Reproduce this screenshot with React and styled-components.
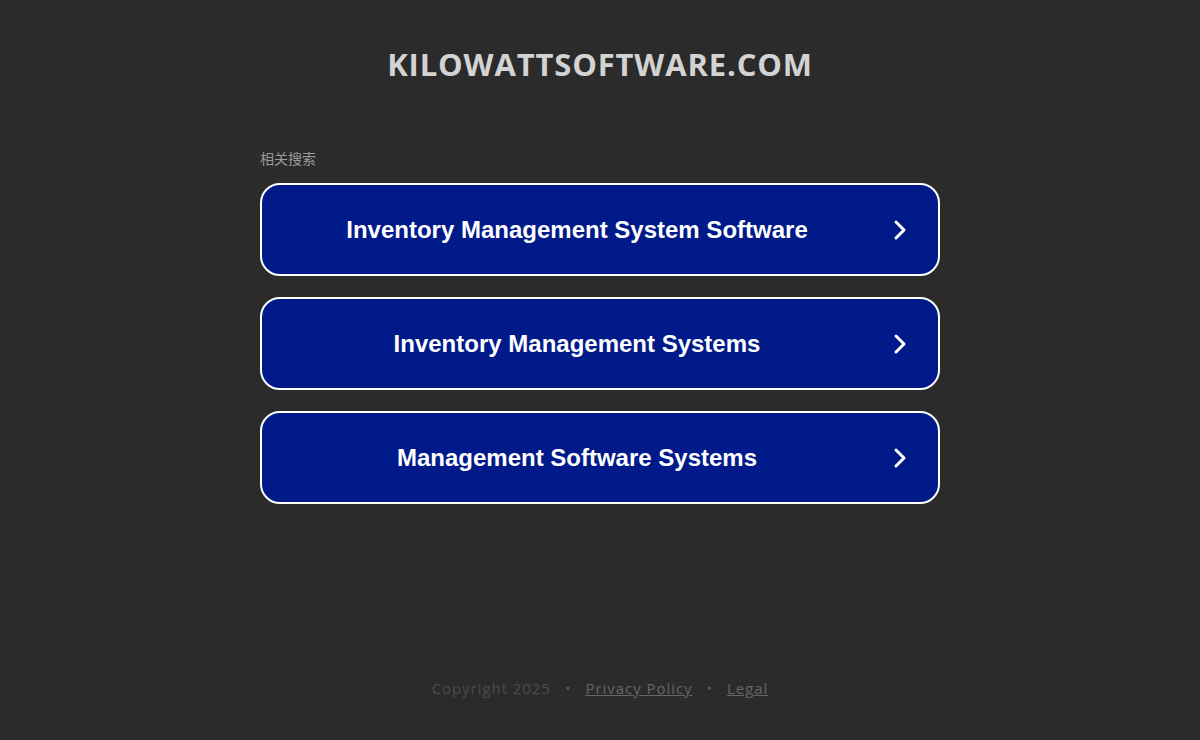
import React from "react"
import styled, { createGlobalStyle } from "styled-components"

const GlobalStyle = createGlobalStyle`
  html, body {
    margin: 0;
    padding: 0;
    background-color: #2b2b2b;
  }
  body {
    font-family: "Open Sans", "Liberation Sans", sans-serif;
  }
`

const Page = styled.div`
  min-height: 740px;
  display: flex;
  flex-direction: column;
  align-items: center;
`

const SiteTitle = styled.h1`
  margin: 43px 0 0;
  font-family: "Open Sans", sans-serif;
  font-weight: 700;
  font-size: 31px;
  line-height: 42px;
  color: #d3d3d3;
  letter-spacing: 0.85px;
`

const Results = styled.div`
  width: 680px;
  margin-top: 64px;
  display: flex;
  flex-direction: column;
`

const Label = styled.div`
  font-family: "Noto Sans CJK SC", sans-serif;
  font-size: 14px;
  line-height: 18px;
  color: #9a9a9a;
  margin-bottom: 16px;
`

const LinkList = styled.div`
  display: flex;
  flex-direction: column;
  gap: 21px;
`

const LinkButton = styled.a`
  box-sizing: border-box;
  height: 93px;
  display: flex;
  align-items: center;
  padding: 0 30px 0 0;
  background-color: #011a8a;
  border: 2px solid #ffffff;
  border-radius: 20px;
  text-decoration: none;
  cursor: pointer;
`

const LinkText = styled.span`
  flex: 1;
  text-align: center;
  font-family: "Liberation Sans", Arial, sans-serif;
  font-weight: 700;
  font-size: 24px;
  color: #ffffff;
`

const Chevron = () => (
  <svg width="16" height="22" viewBox="0 0 16 22" fill="none">
    <path
      d="M4 3 L12 11 L4 19"
      stroke="#ffffff"
      strokeWidth="3"
      strokeLinecap="round"
      strokeLinejoin="round"
    />
  </svg>
)

const Footer = styled.footer`
  margin-top: auto;
  margin-bottom: 42px;
  display: flex;
  align-items: center;
  gap: 14px;
  font-family: "Open Sans", sans-serif;
  font-size: 15px;
  letter-spacing: 0.95px;
  color: #4c4c4c;
`

const FooterLink = styled.a`
  color: #666666;
  text-decoration: underline;
`

const Dot = styled.span`
  font-size: 15px;
  color: #555555;
`

const links = [
  "Inventory Management System Software",
  "Inventory Management Systems",
  "Management Software Systems",
]

const App = () => (
  <>
    <GlobalStyle />
    <Page>
      <SiteTitle>KILOWATTSOFTWARE.COM</SiteTitle>
      <Results>
        <Label>相关搜索</Label>
        <LinkList>
          {links.map((text) => (
            <LinkButton key={text}>
              <LinkText>{text}</LinkText>
              <Chevron />
            </LinkButton>
          ))}
        </LinkList>
      </Results>
      <Footer>
        <span>Copyright 2025</span>
        <Dot>•</Dot>
        <FooterLink>Privacy Policy</FooterLink>
        <Dot>•</Dot>
        <FooterLink>Legal</FooterLink>
      </Footer>
    </Page>
  </>
)

export default App
